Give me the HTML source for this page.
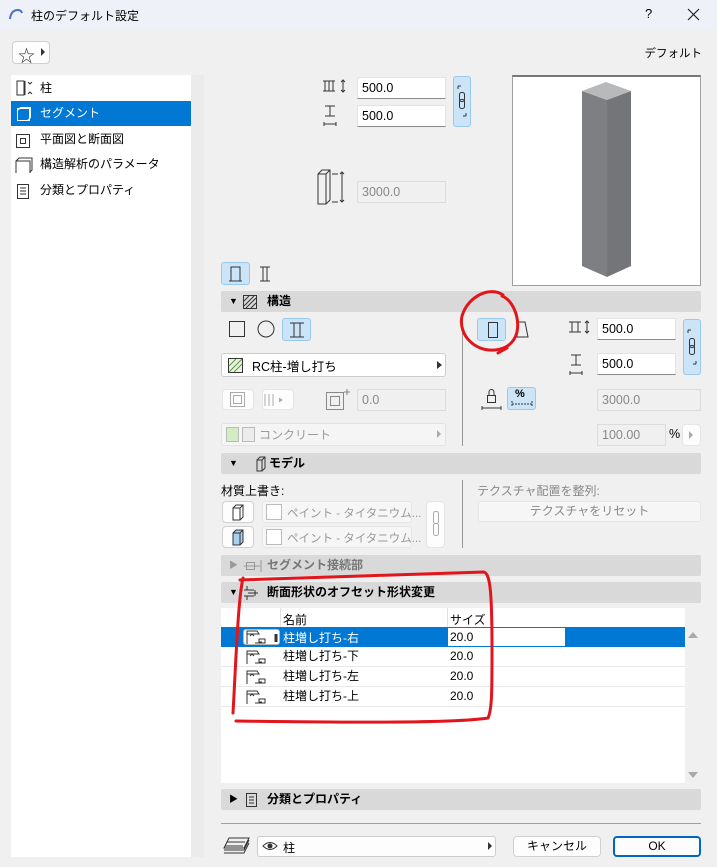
<!DOCTYPE html>
<html><head><meta charset="utf-8"><style>
*{box-sizing:border-box;margin:0;padding:0}
body{width:717px;height:867px;background:#f0f0f0;font-family:"Liberation Sans","Noto Sans CJK JP",sans-serif;font-size:12px;color:#000;position:relative;overflow:hidden}
.a{position:absolute}
.in{position:absolute;background:#fff;border:1px solid #e3e3e3;border-bottom:1px solid #8a8a8a;padding:3px 4px;font-size:12.5px;line-height:14px}
.dis{position:absolute;background:#f0f0f0;border:1px solid #dcdcdc;color:#888;padding:3px 4px;font-size:12.5px;line-height:14px}
.blu{position:absolute;background:#cce4f7;border:1px solid #99c9ef;border-radius:3px}
.hdr{position:absolute;left:221px;width:480px;height:21px;background:#d9d9d9;border-radius:2px;font-weight:bold;font-size:12px;line-height:21px}
.hdr .t{position:absolute;left:8px;top:0;font-size:9px}
.btn{position:absolute;background:#fdfdfd;border:1px solid #d0d0d0;border-radius:4px}
.li{position:absolute;left:11px;width:180px;height:25px;line-height:25px;padding-left:29px;font-size:12px}
.row{position:absolute;left:221px;width:464px;height:20px;border-bottom:1px solid #e8e8e8;line-height:19px}
</style></head><body>
<!-- title bar -->
<div class="a" style="left:0;top:0;width:717px;height:30px;background:#eef2f8"></div>
<svg class="a" style="left:8px;top:7px" width="16" height="14"><path d="M2 12 Q3 3 10 3 Q13 3 14 6" stroke="#4a6fd0" stroke-width="2" fill="none"/></svg>
<div class="a" style="left:31px;top:7px;font-size:12px">柱のデフォルト設定</div>
<div class="a" style="left:645px;top:6px;font-size:13px">?</div>
<svg class="a" style="left:687px;top:8px" width="13" height="13"><path d="M1 1L12 12M12 1L1 12" stroke="#222" stroke-width="1.2"/></svg>
<!-- star -->
<div class="btn" style="left:12px;top:41px;width:38px;height:23px"></div>
<div class="a" style="left:18px;top:42px;font-size:17px;color:#333">☆</div>
<div class="a" style="left:41px;top:48px;width:0;height:0;border-left:4px solid #333;border-top:4px solid transparent;border-bottom:4px solid transparent"></div>
<div class="a" style="right:15px;top:45px;font-size:11.5px">デフォルト</div>
<!-- left panel -->
<div class="a" style="left:11px;top:75px;width:180px;height:782px;background:#fff"></div>
<div class="a" style="left:191px;top:75px;width:13px;height:782px;background:#ebebeb"></div>
<div class="li" style="top:76px">柱</div>
<div class="li" style="top:101px;background:#0078d4;color:#fff">セグメント</div>
<div class="li" style="top:127px">平面図と断面図</div>
<div class="li" style="top:152px">構造解析のパラメータ</div>
<div class="li" style="top:178px">分類とプロパティ</div>
<svg class="a" style="left:14px;top:79px" width="20" height="125" fill="none" stroke="#333" stroke-width="1">
<rect x="3" y="2" width="7" height="14"/><path d="M11 2v14M14 3l2 2 2-2M14 15l2-2 2 2"/>
<rect x="3.5" y="29.5" width="12" height="12" stroke="#fff"/><path d="M3.5 31.5l3-3h10v10l-3 3" stroke="#fff"/>
<rect x="2.5" y="55.5" width="13" height="13"/><rect x="6.5" y="59.5" width="5" height="5"/>
<path d="M2 94v-12h14v12M2 82l3-3h13v12l-2 2"/>
<rect x="3.5" y="105.5" width="11" height="14"/><path d="M6 109h6M6 112h6M6 115h6"/>
</svg>
<!-- top dims -->
<svg class="a" style="left:320px;top:76px" width="30" height="56" fill="none" stroke="#333"><path d="M3 5h12M3 15h12M9 5v10M5 5v10M13 5v10" /><path d="M23 4v12M21 6l2-2 2 2M21 14l2 2 2-2"/><path d="M5 30h10M5 40h10M10 30v10M4 48h12M4 46v4M16 46v4"/></svg>
<div class="in" style="left:357px;top:77px;width:89px;height:22px">500.0</div>
<div class="in" style="left:357px;top:105px;width:89px;height:22px">500.0</div>
<div class="blu" style="left:453px;top:76px;width:18px;height:51px"></div>
<svg class="a" style="left:455px;top:82px" width="14" height="40" fill="none" stroke="#333"><path d="M3 4h3M3 4v3M11 34h-3M11 34v-3"/><rect x="4.5" y="10.5" width="5" height="9" rx="2"/><rect x="4.5" y="17.5" width="5" height="9" rx="2"/></svg>
<svg class="a" style="left:316px;top:168px" width="32" height="40" fill="none" stroke="#333"><path d="M2 6l4-4h8v30l-4 4H2z"/><path d="M10 6v30M2 6h8l4-4" /><path d="M16 6h6M16 34h6M26 4v30M24 6l2-2 2 2M24 32l2 2 2-2"/></svg>
<div class="dis" style="left:357px;top:181px;width:89px;height:22px">3000.0</div>
<!-- preview -->
<div class="a" style="left:512px;top:75px;width:189px;height:211px;background:#fff;border:1px solid #a0a0a0;border-top:2px solid #777"></div>
<svg class="a" style="left:580px;top:80px" width="54" height="200"><polygon points="2,11 26,2 51,11 27,20" fill="#b8b9bb"/><polygon points="2,11 27,20 27,197 2,186" fill="#7e7f83"/><polygon points="27,20 51,11 51,186 27,197" fill="#747579"/></svg>
<!-- mode buttons -->
<div class="blu" style="left:221px;top:262px;width:29px;height:23px"></div>
<svg class="a" style="left:226px;top:264px" width="50" height="20" fill="none" stroke="#333"><path d="M5 17V3h9v14M3 17h13"/><path d="M34 3h10M34 17h10M37 3v14M41 3v14"/></svg>
<!-- 構造 -->
<div class="hdr" style="top:291px"><span class="t">▼</span><svg class="a" style="left:22px;top:4px" width="14" height="14"><rect x=".5" y=".5" width="13" height="13" fill="none" stroke="#333"/><path d="M1 6l5-5M1 11l10-10M3 13l10-10M8 13l5-5" stroke="#333"/></svg><span class="a" style="left:46px">構造</span></div>
<svg class="a" style="left:228px;top:320px" width="50" height="18" fill="none" stroke="#333"><rect x="1.5" y="1.5" width="15" height="15"/><circle cx="38" cy="9" r="8"/></svg>
<div class="blu" style="left:282px;top:318px;width:29px;height:23px"></div>
<svg class="a" style="left:288px;top:321px" width="18" height="18" fill="none" stroke="#333"><path d="M2 2h14M2 16h14M6 2v14M12 2v14"/></svg>
<div class="a" style="left:221px;top:353px;width:225px;height:24px;background:#fff;border:1px solid #ccc;border-radius:3px"></div>
<svg class="a" style="left:228px;top:358px" width="16" height="16"><rect x=".5" y=".5" width="14" height="14" fill="#e9f3e1" stroke="#333"/><path d="M1 8l7-7M1 14l13-13M6 14l8-8" stroke="#5a9a3a"/></svg>
<div class="a" style="left:252px;top:356px;font-size:12.5px">RC柱-増し打ち</div>
<div class="a" style="left:437px;top:361px;border-left:5px solid #333;border-top:4px solid transparent;border-bottom:4px solid transparent"></div>
<div class="btn" style="left:222px;top:389px;width:32px;height:21px;border-color:#e5e5e5"></div>
<div class="btn" style="left:262px;top:389px;width:32px;height:21px;border-color:#e5e5e5"></div>
<svg class="a" style="left:229px;top:391px" width="100" height="22" fill="none" stroke="#aaa"><rect x="1.5" y="1.5" width="14" height="14"/><rect x="4.5" y="4.5" width="8" height="8"/><path d="M36 3v12M40 3v12M44 3v12"/><path d="M50 7l3 2-3 2" fill="#aaa"/></svg>
<svg class="a" style="left:325px;top:388px" width="28" height="24" fill="none" stroke="#888"><rect x="1.5" y="4.5" width="17" height="17"/><rect x="5.5" y="8.5" width="9" height="9"/><path d="M22 1v6M19 4h6"/></svg>
<div class="dis" style="left:357px;top:389px;width:89px;height:22px">0.0</div>
<div class="a" style="left:221px;top:423px;width:225px;height:23px;background:#f5f5f5;border:1px solid #e3e3e3;border-radius:3px"></div>
<div class="a" style="left:226px;top:427px;width:13px;height:15px;background:#d3ecc4;border:1px solid #bbb"></div>
<div class="a" style="left:242px;top:427px;width:13px;height:15px;background:#ececec;border:1px solid #bbb"></div>
<div class="a" style="left:259px;top:426px;color:#999">コンクリート</div>
<div class="a" style="left:437px;top:430px;border-left:4px solid #aaa;border-top:4px solid transparent;border-bottom:4px solid transparent"></div>
<div class="a" style="left:462px;top:315px;width:1px;height:131px;background:#999"></div>
<div class="blu" style="left:477px;top:318px;width:29px;height:23px"></div>
<svg class="a" style="left:486px;top:320px" width="50" height="20" fill="none" stroke="#333"><rect x="2.5" y="2.5" width="9" height="15"/><path d="M32 2h7l3 15h-11z"/></svg>
<svg class="a" style="left:566px;top:318px" width="30" height="62" fill="none" stroke="#333"><path d="M3 4h12M3 14h12M6 4v10M12 4v10M21 3v12M19 5l2-2 2 2M19 13l2 2 2-2"/><path d="M5 37h10M5 47h10M10 37v10M4 55h12M4 53v4M16 53v4"/></svg>
<div class="in" style="left:597px;top:318px;width:79px;height:22px">500.0</div>
<div class="in" style="left:597px;top:353px;width:79px;height:22px">500.0</div>
<div class="blu" style="left:683px;top:319px;width:18px;height:56px"></div>
<svg class="a" style="left:685px;top:326px" width="14" height="44" fill="none" stroke="#333"><path d="M3 4h3M3 4v3M11 38h-3M11 38v-3"/><rect x="4.5" y="12.5" width="5" height="9" rx="2"/><rect x="4.5" y="19.5" width="5" height="9" rx="2"/></svg>
<svg class="a" style="left:481px;top:388px" width="22" height="24" fill="none" stroke="#333"><rect x="6.5" y="7.5" width="8" height="7"/><path d="M8 7V4a2.5 2.5 0 0 1 5 0v3M1 20h19M1 18v4M20 18v4"/></svg>
<div class="blu" style="left:507px;top:387px;width:29px;height:23px"></div>
<div class="a" style="left:515px;top:388px;font-size:11px;font-weight:bold">%</div>
<svg class="a" style="left:510px;top:400px" width="24" height="8" fill="none" stroke="#333"><path d="M2 1v6M22 1v6M2 4h20" stroke-dasharray="2 1"/></svg>
<div class="dis" style="left:597px;top:389px;width:104px;height:22px">3000.0</div>
<div class="dis" style="left:597px;top:424px;width:69px;height:22px">100.00</div>
<div class="a" style="left:669px;top:427px;font-size:12.5px">%</div>
<div class="btn" style="left:682px;top:424px;width:19px;height:22px;border-color:#e5e5e5"></div>
<div class="a" style="left:689px;top:431px;border-left:4px solid #aaa;border-top:4px solid transparent;border-bottom:4px solid transparent"></div>
<!-- モデル -->
<div class="hdr" style="top:453px"><span class="t">▼</span><svg class="a" style="left:34px;top:3px" width="12" height="16" fill="none" stroke="#333"><path d="M2 4l3-3h5v11l-3 3H2zM2 4h5l3-3M7 4v11"/></svg><span class="a" style="left:48px">モデル</span></div>
<div class="a" style="left:221px;top:482px">材質上書き:</div>
<div class="btn" style="left:222px;top:501px;width:32px;height:22px"></div>
<div class="btn" style="left:222px;top:526px;width:32px;height:22px"></div>
<svg class="a" style="left:231px;top:503px" width="14" height="44" fill="none" stroke="#333"><path d="M2 5l3-3h7v12l-3 3H2zM2 5h7l3-3M9 5v12"/><path d="M2 30l3-3h7v12l-3 3H2z" fill="#a9cff0"/><path d="M2 30h7l3-3M9 30v12"/></svg>
<div class="a" style="left:262px;top:501px;width:150px;height:22px;background:#f6f6f6;border:1px solid #e6e6e6;border-radius:3px"></div>
<div class="a" style="left:262px;top:526px;width:150px;height:22px;background:#f6f6f6;border:1px solid #e6e6e6;border-radius:3px"></div>
<div class="a" style="left:266px;top:504px;width:16px;height:16px;background:#fff;border:1px solid #bbb"></div>
<div class="a" style="left:266px;top:529px;width:16px;height:16px;background:#fff;border:1px solid #bbb"></div>
<div class="a" style="left:287px;top:505px;color:#999;font-size:11.5px">ペイント - タイタニウム...</div>
<div class="a" style="left:287px;top:530px;color:#999;font-size:11.5px">ペイント - タイタニウム...</div>
<div class="btn" style="left:426px;top:501px;width:19px;height:47px;border-color:#e5e5e5"></div>
<svg class="a" style="left:429px;top:509px" width="14" height="32" fill="none" stroke="#aaa"><rect x="4.5" y="2.5" width="5" height="12" rx="2"/><rect x="4.5" y="14.5" width="5" height="12" rx="2"/></svg>
<div class="a" style="left:462px;top:480px;width:1px;height:68px;background:#999"></div>
<div class="a" style="left:477px;top:482px;color:#888">テクスチャ配置を整列:</div>
<div class="a" style="left:478px;top:501px;width:223px;height:21px;background:#f6f6f6;border:1px solid #e6e6e6;border-radius:3px;text-align:center;line-height:19px;color:#888">テクスチャをリセット</div>
<!-- セグメント接続部 -->
<div class="hdr" style="top:555px;color:#777"><span class="t" style="color:#999">▶</span><svg class="a" style="left:22px;top:4px" width="22" height="14" fill="none" stroke="#999"><rect x="3.5" y="3.5" width="8" height="7"/><path d="M1 7h16M18 1v12"/></svg><span class="a" style="left:46px">セグメント接続部</span></div>
<!-- 断面形状 -->
<div class="hdr" style="top:582px"><span class="t">▼</span><svg class="a" style="left:22px;top:3px" width="16" height="16" fill="none" stroke="#333"><path d="M4 1v4M4 11v4M1 5h10M1 11h10M5 8h10M12 5v6"/></svg><span class="a" style="left:46px">断面形状のオフセット形状変更</span></div>
<div class="a" style="left:221px;top:608px;width:464px;height:175px;background:#fff"></div>
<div class="a" style="left:685px;top:608px;width:16px;height:175px;background:#f0f0f0"></div>
<div class="a" style="left:688px;top:632px;border-bottom:6px solid #aaa;border-left:5px solid transparent;border-right:5px solid transparent"></div>
<div class="a" style="left:688px;top:772px;border-top:6px solid #aaa;border-left:5px solid transparent;border-right:5px solid transparent"></div>
<div class="a" style="left:280px;top:608px;width:1px;height:19px;background:#e0e0e0"></div>
<div class="a" style="left:447px;top:608px;width:1px;height:19px;background:#e0e0e0"></div>
<div class="a" style="left:283px;top:611px">名前</div>
<div class="a" style="left:450px;top:611px">サイズ</div>
<div class="row" style="top:627px;background:#0078d4;color:#fff;border:none"></div>
<div class="a" style="left:243px;top:629px;width:37px;height:16px;background:#fff;border:1px solid #bbb;border-radius:3px"></div>
<div class="a" style="left:448px;top:628px;width:117px;height:18px;background:#fff;color:#000;padding-left:2px;line-height:18px">20.0</div>
<div class="a" style="left:283px;top:629px;color:#fff">柱増し打ち-右</div>
<div class="row" style="top:647px"><span class="a" style="left:62px">柱増し打ち-下</span><span class="a" style="left:229px">20.0</span></div>
<div class="row" style="top:667px"><span class="a" style="left:62px">柱増し打ち-左</span><span class="a" style="left:229px">20.0</span></div>
<div class="row" style="top:687px"><span class="a" style="left:62px">柱増し打ち-上</span><span class="a" style="left:229px">20.0</span></div>
<svg class="a" style="left:245px;top:629px" width="34" height="80" fill="none" stroke="#333"><path d="M2 15V2h10l2 3h-12M5 7l2-2 2 2M10 14h10v-4h-6v3h3"/><path d="M31 5v8" stroke-width="3"/><path d="M2 35V22h10l2 3h-12M5 27l2-2 2 2M10 34h10v-4h-6v3h3"/><path d="M2 55V42h10l2 3h-12M5 47l2-2 2 2M10 54h10v-4h-6v3h3"/><path d="M2 75V62h10l2 3h-12M5 67l2-2 2 2M10 74h10v-4h-6v3h3"/></svg>
<!-- 分類とプロパティ -->
<div class="hdr" style="top:789px"><span class="t">▶</span><svg class="a" style="left:24px;top:3px" width="14" height="16" fill="none" stroke="#333"><rect x="1.5" y="1.5" width="10" height="13"/><path d="M4 5h5M4 8h5M4 11h5"/></svg><span class="a" style="left:46px">分類とプロパティ</span></div>
<!-- bottom -->
<div class="a" style="left:221px;top:823px;width:480px;height:1px;background:#a0a0a0"></div>
<svg class="a" style="left:223px;top:836px" width="28" height="20" fill="none" stroke="#333"><path d="M6 2h20l-5 10H1zM4 6h18M2 10h18M1 14h20l5-10M1 17h20l5-10"/></svg>
<div class="a" style="left:257px;top:836px;width:239px;height:21px;background:#fdfdfd;border:1px solid #ccc;border-radius:3px"></div>
<svg class="a" style="left:262px;top:840px" width="16" height="12"><path d="M1 6Q8 -1 15 6Q8 13 1 6z" fill="none" stroke="#333"/><circle cx="8" cy="6" r="2.5" fill="#333"/></svg>
<div class="a" style="left:283px;top:839px">柱</div>
<div class="a" style="left:488px;top:842px;border-left:4px solid #333;border-top:4px solid transparent;border-bottom:4px solid transparent"></div>
<div class="btn" style="left:513px;top:836px;width:88px;height:21px;text-align:center;line-height:19px">キャンセル</div>
<div class="btn" style="left:613px;top:836px;width:88px;height:21px;text-align:center;line-height:17px;border:2px solid #0067c0">OK</div>
<!-- red annotations -->
<svg class="a" style="left:0;top:0" width="717" height="867" fill="none" stroke="#e0161c" stroke-width="3" stroke-linecap="round">
<path d="M503 295C490 286 468 296 462 316C458 335 475 352 495 350C505 349 514 344 517 332C520 316 512 300 502 296"/>
<path d="M498 353L507 348"/>
<path d="M240 580C300 578 420 574 484 572C490 574 492 590 492 650C492 690 492 710 488 718C450 724 320 722 236 721"/>
<path d="M243 578C238 600 236 660 233 713"/>
</svg>
</body></html>
